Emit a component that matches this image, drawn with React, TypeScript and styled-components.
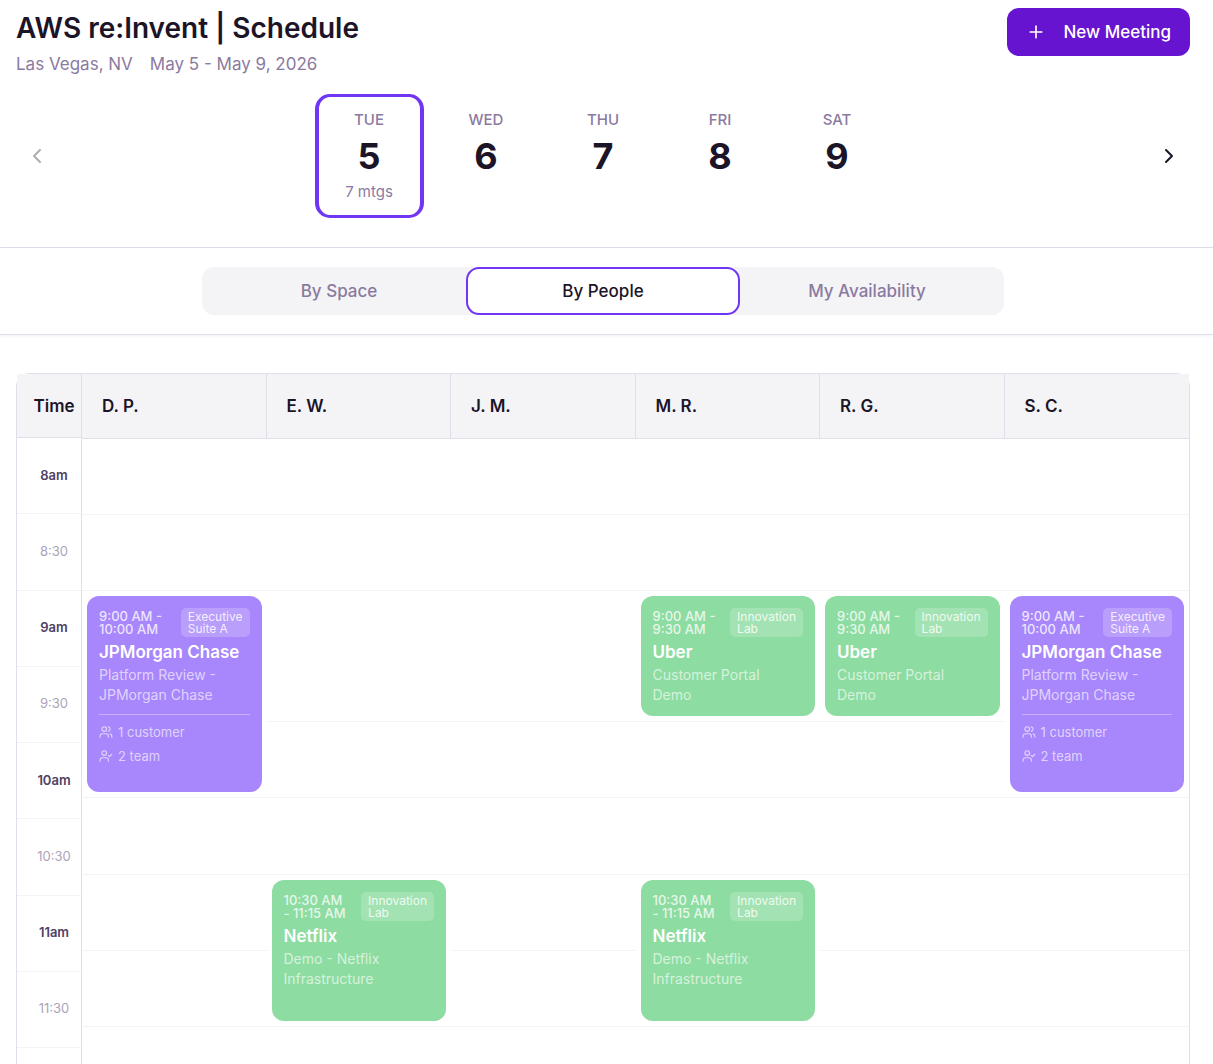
import React, { useState } from "react";
import styled, { createGlobalStyle } from "styled-components";
import { ChevronLeft, ChevronRight, Plus, UserCheck, Users } from "lucide-react";

const color = {
  ink: "#1c1427",
  muted: "#8b7a9f",
  hour: "#4f4163",
  half: "#aca3ba",
  line: "#e0dfe9",
  softLine: "#f3f3f6",
  surface: "#f4f4f7",
  accent: "#7036f5",
  primary: "#6614cf",
};

const GlobalStyle = createGlobalStyle`
  *, *::before, *::after { box-sizing: border-box; }
  body {
    margin: 0;
    background: #fff;
    color: ${color.ink};
    font-family: Inter, "Liberation Sans", sans-serif;
  }
  button { font: inherit; color: inherit; border: 0; background: none; padding: 0; cursor: pointer; }
`;

const Page = styled.div`
  min-height: 100vh;
  display: flex;
  flex-direction: column;
`;

const Header = styled.header`
  display: flex;
  justify-content: space-between;
  align-items: flex-start;
  padding: 8px 23px 0 16px;
`;

const Title = styled.h1`
  margin: 0;
  font-size: 28px;
  line-height: 40px;
  font-weight: 600;
`;

const Meta = styled.div`
  display: flex;
  gap: 17px;
  margin-top: 4px;
  font-size: 17px;
  line-height: 24px;
  color: ${color.muted};
`;

const PrimaryButton = styled.button`
  && {
    display: flex;
    align-items: center;
    gap: 17px;
    height: 48px;
    padding: 0 19px;
    border-radius: 12px;
    background: ${color.primary};
    color: #fff;
    font-size: 17px;
    font-weight: 500;
  }
`;

const DayNav = styled.nav`
  display: flex;
  align-items: center;
  justify-content: space-between;
  padding: 18px 23px 29px 16px;
  border-bottom: 1px solid ${color.line};
`;

const ArrowButton = styled.button`
  && {
    display: grid;
    place-items: center;
    width: 42px;
    height: 42px;
    color: ${color.ink};
  }
  &&:disabled {
    opacity: 0.35;
    cursor: default;
  }
`;

const DayList = styled.div`
  display: flex;
  gap: 8px;
`;

const DayButton = styled.button<{ $active: boolean }>`
  && {
    display: flex;
    flex-direction: column;
    align-items: center;
    gap: 4px;
    width: 109px;
    height: 124px;
    padding: 13px 0;
    border-style: solid;
    border-width: 3px 4px;
    border-color: ${(p) => (p.$active ? color.accent : "transparent")};
    border-radius: 15px;
  }
`;

const DayName = styled.span`
  font-size: 15px;
  line-height: 20px;
  font-weight: 500;
  color: ${color.muted};
`;

const DayNumber = styled.span`
  font-size: 36px;
  line-height: 44px;
  font-weight: 700;
`;

const DayCount = styled.span`
  font-size: 15px;
  line-height: 20px;
  color: ${color.muted};
`;

const TabBar = styled.div`
  padding: 19px 23px 19px 16px;
  border-bottom: 1px solid ${color.line};
  box-shadow: 0 1px 3px rgba(60, 40, 110, 0.07);
`;

const TabList = styled.div`
  display: grid;
  grid-template-columns: repeat(3, minmax(0, 1fr));
  max-width: 802px;
  margin: 0 auto;
  padding: 0 5px;
  border-radius: 12px;
  background: ${color.surface};
`;

const Tab = styled.button<{ $active: boolean }>`
  && {
    height: 48px;
    margin: 0 ${(p) => (p.$active ? "-5px" : "0")};
    border: ${(p) => (p.$active ? `2px solid ${color.accent}` : "0")};
    border-radius: 13px;
    background: ${(p) => (p.$active ? "#fff" : "transparent")};
    color: ${(p) => (p.$active ? color.ink : color.muted)};
    font-size: 17px;
    font-weight: 500;
  }
`;

const Calendar = styled.main`
  flex: 1;
  display: flex;
  align-items: stretch;
  margin: 38px 23px 0 16px;
  border: 1px solid ${color.line};
  border-bottom: 0;
  border-radius: 14px 14px 0 0;
`;

const TimeColumn = styled.div`
  width: 65px;
  flex-shrink: 0;
  border-right: 1px solid ${color.line};
`;

const TimeRows = styled.div`
  display: grid;
  grid-template-rows: 64px;
  grid-auto-rows: 1fr;
  min-height: 674px;
`;

const TimeHead = styled.div`
  display: grid;
  place-items: center;
  padding-left: 10px;
  background: ${color.surface};
  border-bottom: 1px solid ${color.line};
  font-size: 17px;
  font-weight: 600;
`;

const TimeLabel = styled.div<{ $half: boolean }>`
  display: grid;
  place-items: center;
  padding: 0 0 2px 10px;
  border-bottom: 1px solid ${color.softLine};
  font-size: 13px;
  font-weight: ${(p) => (p.$half ? 400 : 600)};
  color: ${(p) => (p.$half ? color.half : color.hour)};
`;

const Board = styled.div`
  flex: 1;
  min-width: 0;
`;

const Table = styled.table`
  display: grid;
  grid-template-columns: repeat(6, minmax(0, 1fr));
  grid-template-rows: 65px 76px 76px 131px;
  grid-auto-rows: 1fr;
  min-height: 653px;

  thead, tbody, tr { display: contents; }
`;

const PersonHead = styled.th`
  display: flex;
  align-items: center;
  padding: 0 20px;
  background: ${color.surface};
  border-bottom: 1px solid ${color.line};
  font-size: 17px;
  font-weight: 600;

  &:not(:last-child) { border-right: 1px solid ${color.line}; }
`;

const Slot = styled.td<{ $column: number; $row: number; $span: number }>`
  grid-column: ${(p) => p.$column + 1};
  grid-row: ${(p) => p.$row + 2} / span ${(p) => p.$span};
  display: flex;
  padding: 5px;
  border-bottom: 1px solid ${color.softLine};
`;

const Card = styled.article<{ $tone: string }>`
  flex: 1;
  min-width: 0;
  padding: 12px;
  border-radius: 12px;
  background: ${(p) => p.$tone};
  color: #fff;
`;

const CardTop = styled.div`
  display: flex;
  justify-content: space-between;
  align-items: flex-start;
  gap: 12px;
`;

const CardTime = styled.div`
  padding-top: 2px;
  font-size: 13px;
  line-height: 13px;
  font-weight: 500;
  color: rgba(255, 255, 255, 0.8);
`;

const Room = styled.div`
  flex-shrink: 0;
  width: min-content;
  padding: 3px 7px 2px;
  border-radius: 5px;
  background: rgba(255, 255, 255, 0.2);
  font-size: 12px;
  line-height: 12px;
  color: rgba(255, 255, 255, 0.85);
`;

const CardTitle = styled.h2`
  margin: 3px 0 1px;
  font-size: 17px;
  line-height: 24px;
  font-weight: 600;
`;

const CardText = styled.p`
  margin: 0;
  padding-right: 8px;
  font-size: 14px;
  line-height: 20px;
  color: rgba(255, 255, 255, 0.65);
`;

const CardStats = styled.div`
  margin-top: 9px;
  padding-top: 5px;
  border-top: 1px solid rgba(255, 255, 255, 0.35);
`;

const Stat = styled.div`
  display: flex;
  align-items: center;
  gap: 5px;
  font-size: 13px;
  line-height: 24px;
  color: rgba(255, 255, 255, 0.65);
`;

const days = [
  { name: "TUE", date: 5, meetings: 7 },
  { name: "WED", date: 6 },
  { name: "THU", date: 7 },
  { name: "FRI", date: 8 },
  { name: "SAT", date: 9 },
];

const tabs = ["By Space", "By People", "My Availability"];
const people = ["D. P.", "E. W.", "J. M.", "M. R.", "R. G.", "S. C."];
const times = ["8am", "8:30", "9am", "9:30", "10am", "10:30", "11am", "11:30"];
const rowCount = 7;

type Meeting = {
  person: number;
  row: number;
  span: number;
  time: string;
  room: string;
  customer: string;
  topic: string;
  tone: string;
  stats?: { customers: number; team: number };
};

const purple = "#a886fb";
const green = "#8ddca1";

const chase = {
  row: 2,
  span: 2,
  time: "9:00 AM - 10:00 AM",
  room: "Executive Suite\u00a0A",
  customer: "JPMorgan Chase",
  topic: "Platform Review - JPMorgan Chase",
  tone: purple,
  stats: { customers: 1, team: 2 },
};
const uber = {
  row: 2,
  span: 1,
  time: "9:00 AM - 9:30 AM",
  room: "Innovation Lab",
  customer: "Uber",
  topic: "Customer Portal Demo",
  tone: green,
};
const netflix = {
  row: 5,
  span: 2,
  time: "10:30 AM - 11:15 AM",
  room: "Innovation Lab",
  customer: "Netflix",
  topic: "Demo - Netflix Infrastructure",
  tone: green,
};

const meetings: Meeting[] = [
  { person: 0, ...chase },
  { person: 1, ...netflix },
  { person: 3, ...uber },
  { person: 3, ...netflix },
  { person: 4, ...uber },
  { person: 5, ...chase },
];

function MeetingCard({ meeting }: { meeting: Meeting }) {
  return (
    <Card $tone={meeting.tone}>
      <CardTop>
        <CardTime>{meeting.time}</CardTime>
        <Room>{meeting.room}</Room>
      </CardTop>
      <CardTitle>{meeting.customer}</CardTitle>
      <CardText>{meeting.topic}</CardText>
      {meeting.stats && (
        <CardStats>
          <Stat>
            <Users size={14} />
            {meeting.stats.customers} customer
          </Stat>
          <Stat>
            <UserCheck size={14} />
            {meeting.stats.team} team
          </Stat>
        </CardStats>
      )}
    </Card>
  );
}

function slotFor(person: number, row: number) {
  const meeting = meetings.find(
    (m) => m.person === person && row >= m.row && row < m.row + m.span
  );
  if (meeting && meeting.row !== row) return null;
  const span = meeting ? meeting.span : 1;
  return (
    <Slot key={person} rowSpan={span} $column={person} $row={row} $span={span}>
      {meeting && <MeetingCard meeting={meeting} />}
    </Slot>
  );
}

export default function App() {
  const [day, setDay] = useState(0);
  const [tab, setTab] = useState(1);

  return (
    <Page>
      <GlobalStyle />
      <Header>
        <div>
          <Title>AWS re:Invent | Schedule</Title>
          <Meta>
            <span>Las Vegas, NV</span>
            <span>May 5 - May 9, 2026</span>
          </Meta>
        </div>
        <PrimaryButton type="button">
          <Plus size={20} />
          New Meeting
        </PrimaryButton>
      </Header>

      <DayNav>
        <ArrowButton type="button" aria-label="Previous days" disabled>
          <ChevronLeft size={24} />
        </ArrowButton>
        <DayList>
          {days.map((d, i) => (
            <DayButton key={d.name} type="button" $active={i === day} onClick={() => setDay(i)}>
              <DayName>{d.name}</DayName>
              <DayNumber>{d.date}</DayNumber>
              {d.meetings && <DayCount>{d.meetings} mtgs</DayCount>}
            </DayButton>
          ))}
        </DayList>
        <ArrowButton type="button" aria-label="Next days">
          <ChevronRight size={24} />
        </ArrowButton>
      </DayNav>

      <TabBar>
        <TabList role="tablist">
          {tabs.map((label, i) => (
            <Tab
              key={label}
              type="button"
              role="tab"
              aria-selected={i === tab}
              $active={i === tab}
              onClick={() => setTab(i)}
            >
              {label}
            </Tab>
          ))}
        </TabList>
      </TabBar>

      <Calendar>
        <TimeColumn>
          <TimeRows>
            <TimeHead>Time</TimeHead>
            {times.map((t) => (
              <TimeLabel key={t} $half={t.includes(":")}>
                {t}
              </TimeLabel>
            ))}
          </TimeRows>
        </TimeColumn>
        <Board>
          <Table>
            <thead>
              <tr>
                {people.map((p) => (
                  <PersonHead key={p} scope="col">
                    {p}
                  </PersonHead>
                ))}
              </tr>
            </thead>
            <tbody>
              {Array.from({ length: rowCount }, (_, row) => (
                <tr key={row}>{people.map((_, person) => slotFor(person, row))}</tr>
              ))}
            </tbody>
          </Table>
        </Board>
      </Calendar>
    </Page>
  );
}
